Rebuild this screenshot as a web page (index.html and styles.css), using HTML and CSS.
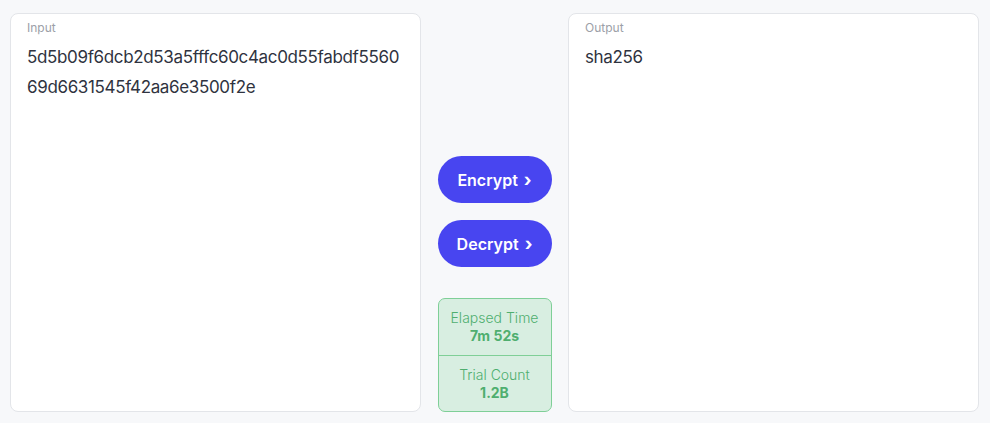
FILE: index.html
```html
<!DOCTYPE html>
<html>
<head>
<meta charset="utf-8">
<link rel="stylesheet" href="styles.css">
</head>
<body>
<div class="app">
  <div class="panel">
    <div class="label">Input</div>
    <div class="content">5d5b09f6dcb2d53a5fffc60c4ac0d55fabdf5560<br>69d6631545f42aa6e3500f2e</div>
  </div>
  <div class="middle">
    <button class="btn">Encrypt <span class="chev">&#8250;</span></button>
    <button class="btn">Decrypt <span class="chev">&#8250;</span></button>
    <div class="stats">
      <div class="stat">
        <div class="stat-label">Elapsed Time</div>
        <div class="stat-value">7m 52s</div>
      </div>
      <div class="stat">
        <div class="stat-label">Trial Count</div>
        <div class="stat-value">1.2B</div>
      </div>
    </div>
  </div>
  <div class="panel">
    <div class="label">Output</div>
    <div class="content">sha256</div>
  </div>
</div>
</body>
</html>
```

FILE: styles.css
```css
html, body {
  margin: 0;
  padding: 0;
  background: #f7f8fa;
  font-family: Inter, "Noto Sans", sans-serif;
}
.app {
  display: flex;
  height: 423px;
  box-sizing: border-box;
  padding: 13px 11px 11px 10px;
}
.panel {
  width: 411px;
  box-sizing: border-box;
  background: #ffffff;
  border: 1px solid #e3e5e9;
  border-radius: 8px;
  padding: 6px 16px;
}
.label {
  font-size: 12px;
  color: #9ca0a8;
  line-height: 16px;
}
.content {
  margin-top: 6px;
  font-size: 17px;
  line-height: 30px;
  color: #2f3340;
  letter-spacing: -0.35px;
}
.middle {
  flex: 1;
  display: flex;
  flex-direction: column;
  align-items: center;
  justify-content: flex-end;
}
.btn {
  width: 114px;
  height: 47px;
  border: none;
  border-radius: 24px;
  background: #4845f0;
  color: #ffffff;
  font-family: Inter, "Noto Sans", sans-serif;
  font-weight: 600;
  font-size: 16px;
  margin-bottom: 17px;
  padding: 0;
}
.btn + .btn {
  margin-bottom: 31px;
}
.chev {
  font-weight: 700;
  font-size: 18px;
  margin-left: 2px;
}
.stats {
  width: 114px;
  box-sizing: border-box;
  background: #d8eee1;
  border: 1px solid #7fcf97;
  border-radius: 7px;
  color: #4fae6f;
  text-align: center;
}
.stat {
  height: 56px;
  box-sizing: border-box;
  padding-top: 9px;
}
.stat + .stat {
  border-top: 1px solid #7fcf97;
}
.stat-label {
  font-size: 14px;
  line-height: 19px;
  font-weight: 300;
}
.stat-value {
  font-size: 14px;
  font-weight: 700;
  line-height: 18px;
}
```
